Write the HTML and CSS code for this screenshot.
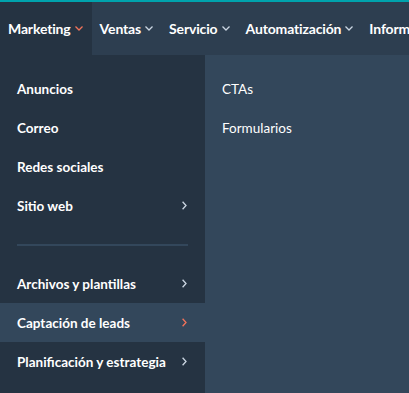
FILE: index.html
```html
<!DOCTYPE html>
<html lang="es">
<head>
<meta charset="utf-8">
<link rel="stylesheet" href="styles.css">
</head>
<body>
<div class="page">
  <nav class="topnav">
    <div class="nav-item active">Marketing<svg class="caret" width="8" height="5" viewBox="0 0 8 5"><polyline points="0.5,0.5 4,4 7.5,0.5" fill="none" stroke="currentColor" stroke-width="1.3"/></svg></div>
    <div class="nav-item">Ventas<svg class="caret" width="8" height="5" viewBox="0 0 8 5"><polyline points="0.5,0.5 4,4 7.5,0.5" fill="none" stroke="currentColor" stroke-width="1.3"/></svg></div>
    <div class="nav-item">Servicio<svg class="caret" width="8" height="5" viewBox="0 0 8 5"><polyline points="0.5,0.5 4,4 7.5,0.5" fill="none" stroke="currentColor" stroke-width="1.3"/></svg></div>
    <div class="nav-item">Automatización<svg class="caret" width="8" height="5" viewBox="0 0 8 5"><polyline points="0.5,0.5 4,4 7.5,0.5" fill="none" stroke="currentColor" stroke-width="1.3"/></svg></div>
    <div class="nav-item">Informes</div>
  </nav>
  <div class="dropdown">
    <ul class="menu primary">
      <li class="row">Anuncios</li>
      <li class="row">Correo</li>
      <li class="row">Redes sociales</li>
      <li class="row">Sitio web<svg class="chev" width="5" height="9" viewBox="0 0 5 9"><polyline points="0.6,0.8 4,4.5 0.6,8.2" fill="none" stroke="currentColor" stroke-width="1.3"/></svg></li>
      <li class="divider"><span></span></li>
      <li class="row">Archivos y plantillas<svg class="chev" width="5" height="9" viewBox="0 0 5 9"><polyline points="0.6,0.8 4,4.5 0.6,8.2" fill="none" stroke="currentColor" stroke-width="1.3"/></svg></li>
      <li class="row selected">Captación de leads<svg class="chev" width="5" height="9" viewBox="0 0 5 9"><polyline points="0.6,0.8 4,4.5 0.6,8.2" fill="none" stroke="currentColor" stroke-width="1.3"/></svg></li>
      <li class="row">Planificación y estrategia<svg class="chev" width="5" height="9" viewBox="0 0 5 9"><polyline points="0.6,0.8 4,4.5 0.6,8.2" fill="none" stroke="currentColor" stroke-width="1.3"/></svg></li>
    </ul>
    <ul class="menu secondary">
      <li class="row">CTAs</li>
      <li class="row">Formularios</li>
    </ul>
  </div>
</div>
</body>
</html>
```
FILE: styles.css
```css
* { box-sizing: border-box; }
html, body { margin: 0; padding: 0; }
body {
  width: 409px;
  height: 393px;
  overflow: hidden;
  background: #33475b;
  font-family: Lato, "Noto Sans", sans-serif;
  color: #ffffff;
}
.page {
  border-top: 2px solid #00a3ad;
  display: flex;
  flex-direction: column;
  height: 393px;
}
.topnav {
  display: flex;
  height: 53px;
  background: #2d3e50;
  white-space: nowrap;
  overflow: hidden;
}
.nav-item {
  display: flex;
  align-items: center;
  padding: 0 8px 0 8px;
  font-size: 14px;
  font-weight: 700;
  letter-spacing: -0.15px;
  flex-shrink: 0;
}
.nav-item .caret {
  margin-left: 4px;
  color: #cbd6e2;
}
.nav-item.active {
  background: #253342;
  padding-right: 9px;
}
.nav-item.active .caret { color: #f2735a; }
.dropdown {
  display: flex;
  flex: 1;
}
.menu {
  list-style: none;
  margin: 0;
  padding: 14px 0 0;
}
.primary {
  width: 205px;
  background: #253342;
}
.secondary {
  flex: 1;
  background: #33475b;
}
.row {
  height: 39px;
  display: flex;
  align-items: center;
  justify-content: space-between;
  padding: 0 18px 0 17px;
  font-size: 13.5px;
  font-weight: 700;
}
.secondary .row { font-weight: 400; font-size: 13.5px; }
.row .chev { color: #cbd6e2; }
.row.selected { background: #33475b; }
.row.selected .chev { color: #f2735a; }
.divider {
  height: 39px;
  display: flex;
  align-items: center;
  padding: 0 17px;
}
.divider span {
  display: block;
  width: 171px;
  height: 2px;
  background: #33475b;
}
```
